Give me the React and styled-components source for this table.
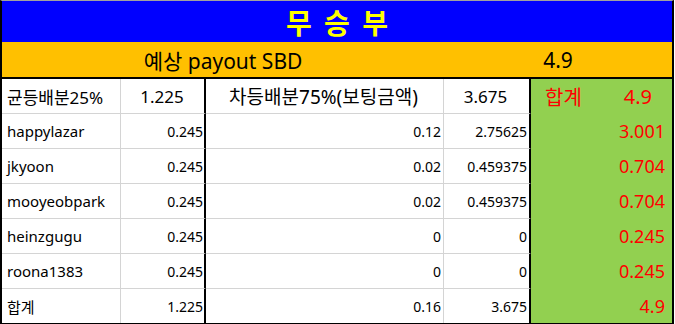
import React from "react";
import styled, { createGlobalStyle } from "styled-components";

const Global = createGlobalStyle`
  html, body { margin: 0; padding: 0; background: #fff; }
  body { font-family: "Noto Sans", "Noto Sans CJK KR", sans-serif; }
`;

const Sheet = styled.div`
  display: grid;
  grid-template-columns: 119px 85px 238px 87px 141px;
  width: max-content;
  border-top: 1px solid #a0a0a0;
  border-left: 2px solid #000;
  border-right: 2px solid #000;
  border-bottom: 2px solid #000;
  font-family: "Noto Sans", "Noto Sans CJK KR", sans-serif;
`;

const TitleBar = styled.div`
  grid-column: 1 / -1;
  height: 41px;
  background: #0000ff;
  color: #ffff00;
  font-family: "Noto Sans CJK KR", sans-serif;
  font-weight: 700;
  font-size: 28px;
  display: flex;
  align-items: center;
  justify-content: center;
  word-spacing: 6px;
  white-space: pre;
`;

const Banner = styled.div`
  grid-column: ${(p) => p.$span};
  box-sizing: border-box;
  height: 37px;
  background: #ffc000;
  border-bottom: 2px solid #000;
  display: flex;
  align-items: center;
  justify-content: center;
  font-size: 21px;
  color: #000;
  padding-top: 1px;
`;

const Cell = styled.div`
  box-sizing: border-box;
  height: ${(p) => (p.$last ? 34 : 35)}px;
  display: flex;
  align-items: center;
  white-space: nowrap;
  background: #fff;
  color: #000;
  border-bottom: ${(p) => (p.$last ? "none" : "1px solid #d4d4d4")};
`;

const NameCell = styled(Cell)`
  justify-content: flex-start;
  padding-left: 5px;
  font-size: ${(p) => (p.$head ? 17 : 15)}px;
  border-right: 1px solid #d4d4d4;
`;

const EqualCell = styled(Cell)`
  justify-content: ${(p) => (p.$head ? "center" : "flex-end")};
  padding-right: 1px;
  font-size: ${(p) => (p.$head ? 17 : 14)}px;
  border-right: 2px solid #000;
`;

const RateCell = styled(Cell)`
  justify-content: ${(p) => (p.$head ? "center" : "flex-end")};
  padding-right: 2px;
  font-size: ${(p) => (p.$head ? 19 : 14)}px;
  border-right: 1px solid #d4d4d4;
`;

const AmountCell = styled(Cell)`
  justify-content: ${(p) => (p.$head ? "center" : "flex-end")};
  padding-right: 2px;
  font-size: ${(p) => (p.$head ? 17 : 14)}px;
  border-right: 2px solid #000;
`;

const TotalCell = styled(Cell)`
  background: #92d050;
  color: #ff0000;
  border-bottom-color: #92d050;
  justify-content: ${(p) => (p.$head ? "space-between" : "flex-end")};
  padding: ${(p) => (p.$head ? "0 20px 0 14px" : "0 7px 0 0")};
  font-size: ${(p) => (p.$head ? 20 : 18)}px;
`;

const rows = [
  ["happylazar", "0.245", "0.12", "2.75625", "3.001"],
  ["jkyoon", "0.245", "0.02", "0.459375", "0.704"],
  ["mooyeobpark", "0.245", "0.02", "0.459375", "0.704"],
  ["heinzgugu", "0.245", "0", "0", "0.245"],
  ["roona1383", "0.245", "0", "0", "0.245"],
  ["합계", "1.225", "0.16", "3.675", "4.9"],
];

export default function App() {
  return (
    <>
      <Global />
      <Sheet>
        <TitleBar>무 승 부</TitleBar>
        <Banner $span="1 / 4">예상 payout SBD</Banner>
        <Banner $span="4 / 6">4.9</Banner>

        <NameCell $head>균등배분25%</NameCell>
        <EqualCell $head>1.225</EqualCell>
        <RateCell $head>차등배분75%(보팅금액)</RateCell>
        <AmountCell $head>3.675</AmountCell>
        <TotalCell $head>
          <span>합계</span>
          <span>4.9</span>
        </TotalCell>

        {rows.map((r, i) => {
          const last = i === rows.length - 1;
          return (
            <React.Fragment key={r[0]}>
              <NameCell $last={last}>{r[0]}</NameCell>
              <EqualCell $last={last}>{r[1]}</EqualCell>
              <RateCell $last={last}>{r[2]}</RateCell>
              <AmountCell $last={last}>{r[3]}</AmountCell>
              <TotalCell $last={last}>{r[4]}</TotalCell>
            </React.Fragment>
          );
        })}
      </Sheet>
    </>
  );
}
